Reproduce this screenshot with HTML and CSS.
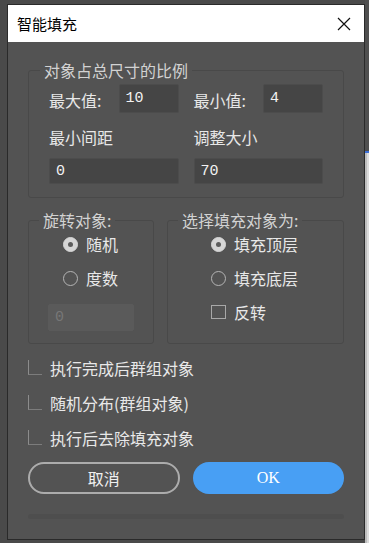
FILE: index.html
```html
<!DOCTYPE html>
<html lang="zh-CN">
<head>
    <meta charset="UTF-8">
    <meta name="viewport" content="width=device-width, initial-scale=1.0">
    <title>智能填充</title>
    <link rel="stylesheet" href="styles.css">
</head>
<body>

<div class="window">
    <div class="titlebar">
        <span class="title">智能填充</span>
        <svg class="close-icon" width="14" height="14" viewBox="0 0 14 14">
            <path d="M1 1 L13 13 M13 1 L1 13" stroke="#111" stroke-width="1.2" fill="none"/>
        </svg>
    </div>

    <div class="content">
        <fieldset class="group size-group">
            <legend>对象占总尺寸的比例</legend>
            <div class="size-grid">
                <div class="inline-field">
                    <label>最大值:</label>
                    <input class="num-input short" type="text" value="10">
                </div>
                <div class="inline-field">
                    <label>最小值:</label>
                    <input class="num-input short" type="text" value="4">
                </div>
                <label class="field-label">最小间距</label>
                <label class="field-label">调整大小</label>
                <input class="num-input wide" type="text" value="0">
                <input class="num-input wide" type="text" value="70">
            </div>
        </fieldset>

        <div class="group-row">
            <fieldset class="group rotate-group">
                <legend>旋转对象:</legend>
                <div class="choice-list">
                    <div class="choice"><span class="radio checked"></span>随机</div>
                    <div class="choice"><span class="radio"></span>度数</div>
                </div>
                <input class="num-input disabled" type="text" value="0" disabled>
            </fieldset>

            <fieldset class="group fill-group">
                <legend>选择填充对象为:</legend>
                <div class="choice-list">
                    <div class="choice"><span class="radio checked"></span>填充顶层</div>
                    <div class="choice"><span class="radio"></span>填充底层</div>
                    <div class="choice"><span class="checkbox"></span>反转</div>
                </div>
            </fieldset>
        </div>

        <div class="options">
            <div class="option"><span class="check-mark"></span>执行完成后群组对象</div>
            <div class="option"><span class="check-mark"></span>随机分布(群组对象)</div>
            <div class="option"><span class="check-mark"></span>执行后去除填充对象</div>
        </div>

        <div class="actions">
            <button class="btn cancel-btn">取消</button>
            <button class="btn ok-btn">OK</button>
        </div>

        <div class="progress"></div>
    </div>
</div>

<div class="side-app">
    <div class="side-top"></div>
    <div class="side-line"></div>
    <div class="side-bottom"></div>
</div>

</body>
</html>
```

FILE: styles.css
```css
html, body {
    height: 100%;
}

body {
    margin: 0;
    padding-left: 7px;
    display: flex;
    background-color: #4a4a4a;
    font-family: "Noto Sans CJK SC", "Liberation Sans", sans-serif;
    font-size: 16px;
    color: #e8e8e8;
    overflow: hidden;
}

.window {
    width: 358px;
    height: 536px;
    margin-top: 4px;
    box-sizing: border-box;
    border: 1px solid #2a2a2a;
    background-color: #535353;
    display: flex;
    flex-direction: column;
}

.titlebar {
    height: 37px;
    flex-shrink: 0;
    background-color: #fff;
    display: flex;
    align-items: center;
    justify-content: space-between;
    padding: 0 13px 0 9px;
}

.title {
    font-size: 15px;
    color: #000;
    line-height: 20px;
}

.close-icon {
    display: block;
}

.content {
    padding: 17px 20px 0 20px;
}

/* group boxes */
.group {
    margin: 0;
    min-width: 0;
    border: 1px solid #494949;
    border-radius: 3px;
}

.group legend {
    padding: 0 4px;
    margin-left: -9px;
    line-height: 22px;
    color: #d2d2d2;
}

.size-group {
    padding: 3px 20px 13px 20px;
}

.size-grid {
    display: grid;
    grid-template-columns: 1fr 1fr;
    column-gap: 15px;
}

.inline-field {
    display: flex;
    align-items: center;
    justify-content: space-between;
    height: 29px;
}

.inline-field label {
    padding-top: 3px;
}

.field-label {
    line-height: 22px;
    margin: 13px 0 10px;
}

.num-input {
    box-sizing: border-box;
    border: 1px solid #4c4c4c;
    border-radius: 2px;
    background-color: #454545;
    color: #f2f2f2;
    font-family: "Liberation Mono", monospace;
    font-size: 15px;
    padding: 0 6px;
    outline: none;
}

.num-input.short {
    width: 60px;
    height: 29px;
}

.num-input.wide {
    width: 100%;
    height: 26px;
}

.num-input.disabled {
    width: 86px;
    height: 27px;
    margin-top: 14px;
    background-color: #5a5a5a;
    border-color: #5a5a5a;
    color: #777;
}

.group-row {
    display: flex;
    gap: 13px;
    margin-top: 11px;
}

.rotate-group {
    width: 126px;
    box-sizing: border-box;
    padding: 1px 10px 12px 19px;
}

.fill-group {
    flex: 1;
    padding: 1px 10px 12px 19px;
}

.choice-list {
    display: flex;
    flex-direction: column;
    gap: 10px;
    margin-left: 15px;
}

.fill-group .choice-list {
    margin-left: 24px;
}

.choice {
    display: flex;
    align-items: center;
    gap: 8px;
    height: 24px;
    line-height: 24px;
}

.radio {
    width: 15px;
    height: 15px;
    box-sizing: border-box;
    border-radius: 50%;
    border: 1.5px solid #b4b4b4;
    flex-shrink: 0;
    display: flex;
    align-items: center;
    justify-content: center;
}

.radio.checked {
    background-color: #d6d6d6;
    border-color: #d6d6d6;
}

.radio.checked::after {
    content: "";
    width: 5px;
    height: 5px;
    border-radius: 50%;
    background-color: #5c5c5c;
}

.checkbox {
    width: 15px;
    height: 14px;
    box-sizing: border-box;
    border: 1px solid #a8a8a8;
    flex-shrink: 0;
}

/* bottom options */
.options {
    margin-top: 6px;
}

.option {
    display: flex;
    align-items: center;
    gap: 8px;
    height: 35px;
}

.check-mark {
    width: 14px;
    height: 15px;
    box-sizing: border-box;
    border-left: 1px solid #8c8c8c;
    border-bottom: 1px solid #7c7c7c;
    flex-shrink: 0;
}

.actions {
    display: grid;
    grid-template-columns: 1fr 1fr;
    gap: 13px;
    margin-top: 7px;
}

.btn {
    height: 32px;
    border-radius: 16px;
    font-size: 16px;
    cursor: pointer;
}

.cancel-btn {
    background: transparent;
    border: 2px solid #acacac;
    color: #f0f0f0;
    font-family: "Noto Sans CJK SC", sans-serif;
}

.ok-btn {
    background-color: #489ff4;
    border: none;
    color: #fff;
    font-family: "Liberation Serif", serif;
}

.progress {
    height: 5px;
    margin-top: 20px;
    border-radius: 3px;
    background-color: #4e4e4e;
}

/* app behind the dialog */
.side-app {
    flex: 1;
    display: flex;
    flex-direction: column;
}

.side-top {
    height: 151px;
    background-color: #4f4f4f;
}

.side-line {
    height: 2px;
    background-color: #3d6fd6;
}

.side-bottom {
    flex: 1;
    background-color: #dcdcdc;
    border-left: 2px solid #bdbdbd;
}
```
